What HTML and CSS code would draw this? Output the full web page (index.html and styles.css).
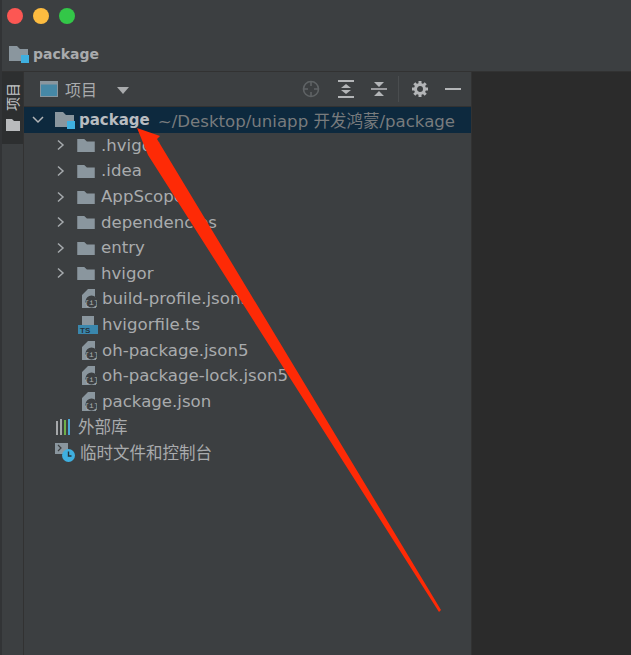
FILE: index.html
```html
<!DOCTYPE html>
<html lang="zh">
<head>
<meta charset="utf-8">
<title>package</title>
<link rel="stylesheet" href="styles.css">
</head>
<body>
<div class="window">
  <svg width="0" height="0" class="defs">
    <defs>
      <symbol id="folder" viewBox="0 0 20 16"><path d="M0 1h8l3 3h9v12H0z" fill="#8a969e"/></symbol>
      <symbol id="chev" viewBox="0 0 10 12"><path d="M2 1.500 7 6l-5 4.500" fill="none" stroke="#a6aaad" stroke-width="1.500"/></symbol>
      <symbol id="json" viewBox="0 0 16 19"><path d="M1 6 7 0h7v8h-6v11H1z" fill="#8a969e"/><path d="M14 8h1v6h-1zM8 15h7v4H8z" fill="#8a969e"/><circle cx="10.500" cy="12.500" r="6" fill="#3c3f41"/><text x="10.500" y="15.500" class="jsontxt" text-anchor="middle">{i}</text></symbol>
    </defs>
  </svg>
  <header class="titlebar">
    <span class="light red"></span><span class="light yellow"></span><span class="light green"></span>
  </header>
  <div class="crumb">
    <svg class="modfolder" width="20" height="18" viewBox="0 0 20 18"><path d="M0 1h8l3 3h8v12H0z" fill="#8a969e"/><rect x="12" y="10" width="8" height="8" fill="#3fb0e0"/></svg>
    <span class="crumb-label">package</span>
  </div>
  <div class="main">
    <aside class="rail">
      <div class="rail-tab">
        <span class="rail-text">项目</span>
        <svg width="14" height="12" viewBox="0 0 14 12"><path d="M0 0h6l2 2h6v10H0z" fill="#b9bbbd"/></svg>
      </div>
    </aside>
    <section class="panel">
      <div class="toolbar">
        <svg class="winicon" width="18" height="16" viewBox="0 0 18 16"><rect x=".5" y=".5" width="17" height="15" fill="#4688a6" stroke="#8a969e"/><rect x="1" y="1" width="16" height="2.500" fill="#8a969e"/></svg>
        <span class="toolbar-title">项目</span>
        <span class="caret"></span>
        <span class="spacer"></span>
        <svg class="tool target" width="18" height="18" viewBox="0 0 18 18"><circle cx="9" cy="9" r="7.500" fill="none" stroke="#5f6365" stroke-width="1.600"/><path d="M9 1v5M9 12v5M1 9h5M12 9h5" stroke="#5f6365" stroke-width="1.600"/></svg>
        <svg class="tool" width="16" height="18" viewBox="0 0 16 18"><path d="M0 1h16M0 17h16" stroke="#b3b5b7" stroke-width="2"/><path d="M8 4l5 4H3zM8 14l5-4H3z" fill="#b3b5b7"/></svg>
        <svg class="tool" width="16" height="16" viewBox="0 0 16 16"><path d="M0 8h16" stroke="#b3b5b7" stroke-width="1.600"/><path d="M3 1h10L8 6zM3 15h10L8 10z" fill="#b3b5b7"/></svg>
        <span class="sep"></span>
        <svg class="tool gear" width="16" height="16" viewBox="0 0 16 16"><circle cx="8" cy="8" r="4.500" fill="none" stroke="#b3b5b7" stroke-width="3"/><path d="M8 0v3M8 13v3M0 8h3M13 8h3M2.300 2.300l2.200 2.200M11.500 11.500l2.200 2.200M13.700 2.300l-2.200 2.200M4.500 11.500l-2.200 2.200" stroke="#b3b5b7" stroke-width="3"/></svg>
        <svg class="tool" width="16" height="16" viewBox="0 0 16 16"><path d="M0 8h16" stroke="#b3b5b7" stroke-width="2"/></svg>
      </div>
      <ul class="tree">
        <li class="row root">
          <svg class="chev" width="12" height="10" viewBox="0 0 12 10"><path d="M1 2l5 5 5-5" fill="none" stroke="#b3b5b7" stroke-width="1.500"/></svg>
          <svg class="icon" width="20" height="18" viewBox="0 0 20 18"><path d="M0 1h8l3 3h8v12H0z" fill="#8a969e"/><rect x="12" y="10" width="8" height="8" fill="#3fb0e0"/></svg>
          <span class="name bold">package</span><span class="path">~/Desktop/uniapp <span class="cjk">开发鸿蒙</span>/package</span>
        </li>
        <li class="row l1"><svg class="chev" width="10" height="12"><use href="#chev"/></svg><svg class="icon" width="18" height="14"><use href="#folder"/></svg><span class="name">.hvigor</span></li>
        <li class="row l1"><svg class="chev" width="10" height="12"><use href="#chev"/></svg><svg class="icon" width="18" height="14"><use href="#folder"/></svg><span class="name">.idea</span></li>
        <li class="row l1"><svg class="chev" width="10" height="12"><use href="#chev"/></svg><svg class="icon" width="18" height="14"><use href="#folder"/></svg><span class="name">AppScope</span></li>
        <li class="row l1"><svg class="chev" width="10" height="12"><use href="#chev"/></svg><svg class="icon" width="18" height="14"><use href="#folder"/></svg><span class="name">dependencies</span></li>
        <li class="row l1"><svg class="chev" width="10" height="12"><use href="#chev"/></svg><svg class="icon" width="18" height="14"><use href="#folder"/></svg><span class="name">entry</span></li>
        <li class="row l1"><svg class="chev" width="10" height="12"><use href="#chev"/></svg><svg class="icon" width="18" height="14"><use href="#folder"/></svg><span class="name">hvigor</span></li>
        <li class="row l2"><svg class="icon" width="16" height="19"><use href="#json"/></svg><span class="name">build-profile.json5</span></li>
        <li class="row l2 ts"><svg class="icon tsicon" width="20" height="18" viewBox="0 0 20 18"><path d="M4 0h12v11H4z" fill="#8a969e"/><rect y="9" width="20" height="9" fill="#3a87ad"/><text x="2" y="17" class="tstxt">TS</text></svg><span class="name">hvigorfile.ts</span></li>
        <li class="row l2"><svg class="icon" width="16" height="19"><use href="#json"/></svg><span class="name">oh-package.json5</span></li>
        <li class="row l2"><svg class="icon" width="16" height="19"><use href="#json"/></svg><span class="name">oh-package-lock.json5</span></li>
        <li class="row l2"><svg class="icon" width="16" height="19"><use href="#json"/></svg><span class="name">package.json</span></li>
        <li class="row l0">
          <svg class="icon" width="18" height="16" viewBox="0 0 18 16"><path d="M1 2h2v14H1z" fill="#a6a8aa"/><path d="M5 0h2v16H5z" fill="#a6a8aa"/><path d="M9 1h2v15H9z" fill="#6fb04a"/><path d="M13 0h2v16h-2z" fill="#4aa7d6"/></svg>
          <span class="name cjk">外部库</span>
        </li>
        <li class="row l0">
          <svg class="icon" width="20" height="19" viewBox="0 0 20 19"><rect width="13" height="11" y="0" fill="#8a969e"/><path d="M3 2l3 3-3 3" fill="none" stroke="#3c3f41" stroke-width="1.200"/><circle cx="13.500" cy="12.500" r="6.500" fill="#3fb0e0"/><path d="M13.500 8.500v4.500h3" fill="none" stroke="#24323a" stroke-width="1.400"/></svg>
          <span class="name cjk">临时文件和控制台</span>
        </li>
      </ul>
    </section>
    <div class="editor"></div>
  </div>
  <svg class="arrow" width="631" height="655" viewBox="0 0 631 655"><path d="M137 128 160 136 157 139 441 610 439 612 148 155Z" fill="#fe2a06"/></svg>
</div>
</body>
</html>
```
FILE: styles.css
```css
* { box-sizing: border-box; }
html, body { margin: 0; padding: 0; }
body { width: 631px; height: 655px; overflow: hidden; background: #3c3f41; font-family: "DejaVu Sans", "Noto Sans CJK SC", sans-serif; }
.window { position: relative; width: 631px; height: 655px; display: flex; flex-direction: column; background: #3c3f41; border-left: 2px solid #323436; }
.defs { position: absolute; }
.titlebar { height: 33px; display: flex; align-items: center; gap: 10px; padding: 0 0 1px 5px; background: #3c3f41; flex: none; }
.light { width: 16px; height: 16px; border-radius: 50%; }
.red { background: #fc5753; }
.yellow { background: #fdbc40; }
.green { background: #33c748; }
.crumb { height: 39px; display: flex; align-items: center; padding: 3px 0 0 7px; gap: 4px; border-bottom: 1px solid #323232; flex: none; }
.crumb-label { font-size: 14px; font-weight: 700; color: #a9abad; }
.main { flex: 1; display: flex; min-height: 0; }
.rail { width: 22px; flex: none; background: #3c3f41; border-right: 1px solid #323232; }
.rail-tab { height: 72px; background: #2d2f30; display: flex; flex-direction: column; align-items: center; padding-top: 11px; gap: 8px; }
.rail-text { writing-mode: vertical-rl; text-orientation: sideways; transform: rotate(180deg); font-size: 14px; color: #c4c6c8; line-height: 16px; }
.panel { width: 447px; flex: none; display: flex; flex-direction: column; }
.toolbar { height: 35px; display: flex; align-items: center; padding: 0 10px 0 16px; border-bottom: 1px solid #323232; flex: none; }
.toolbar-title { font-size: 16px; color: #a9abad; margin-left: 7px; }
.caret { width: 0; height: 0; border: 6px solid transparent; border-top: 7px solid #a9abad; border-bottom: 0; margin-left: 20px; margin-top: 2px; }
.spacer { flex: 1; }
.tool { margin-left: 17px; flex: none; }
.target { margin-right: 1px; }
.sep { width: 1px; height: 26px; background: #4a4d4f; margin-left: 11px; }
.gear { margin-left: 13px; }
.tree { list-style: none; margin: 0; padding: 0; }
.row { height: 25.600px; display: flex; align-items: center; font-size: 16.600px; color: #a9abad; white-space: nowrap; }
.cjk { font-size: 16.500px; }
.root { background: #0d293e; }
.root .chev { margin-left: 8px; }
.root .icon { margin-left: 11px; }
.root .name { margin-left: 4px; }
.bold { font-weight: 700; color: #b8bcc0; font-size: 15px; }
.path { margin-left: 8px; color: #787b7d; }
.l1 .chev { margin-left: 32px; }
.l1 .icon { margin-left: 11px; }
.l1 .name { margin-left: 6px; }
.l2 .icon { margin-left: 57px; }
.l2 .name { margin-left: 5px; }
.l2 .tsicon { margin-left: 54px; }
.ts .name { margin-left: 4px; }
.l0 .icon { margin-left: 31px; flex: none; }
.l0 .name { margin-left: 5px; margin-bottom: 2px; }
.jsontxt { font-size: 8px; font-family: "Liberation Mono", monospace; fill: #a9abad; }
.tstxt { font-size: 8px; font-weight: 700; fill: #24323a; font-family: "Liberation Sans", sans-serif; }
.editor { flex: 1; background: #2b2b2b; border-left: 1px solid #323232; }
.arrow { position: absolute; left: -2px; top: 0; pointer-events: none; }
```
